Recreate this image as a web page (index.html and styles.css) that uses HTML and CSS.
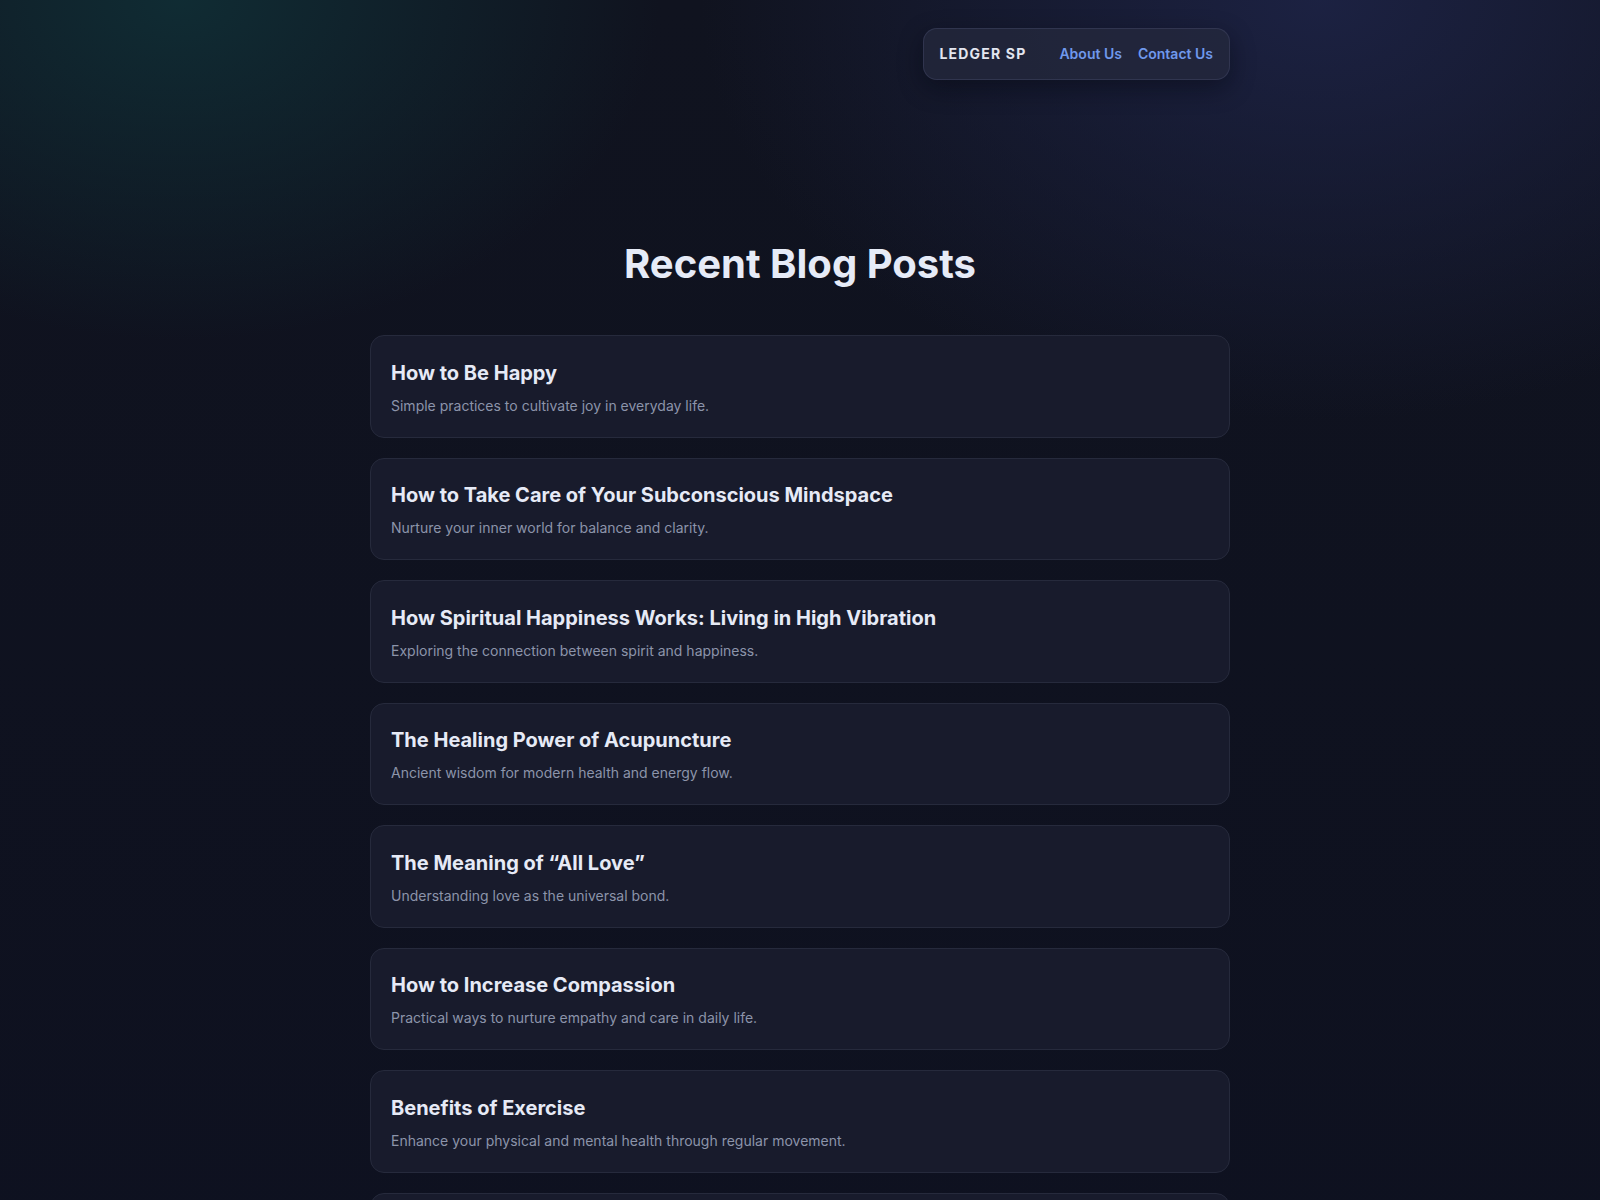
FILE: index.html
```html
<!DOCTYPE html>
<html lang="en">
<head>
<meta charset="utf-8">
<title>Ledger SP — Recent Blog Posts</title>
<link rel="stylesheet" href="styles.css">
</head>
<body>
<div class="page">
  <header class="topbar">
    <nav class="nav">
      <span class="brand">LEDGER SP</span>
      <div class="links">
        <a href="#" class="link">About Us</a>
        <a href="#" class="link">Contact Us</a>
      </div>
    </nav>
  </header>
  <main class="main">
    <h1 class="heading">Recent Blog Posts</h1>
    <div class="posts">
      <article class="card"><h2 class="card-title">How to Be Happy</h2><p class="card-desc">Simple practices to cultivate joy in everyday life.</p></article>
      <article class="card"><h2 class="card-title">How to Take Care of Your Subconscious Mindspace</h2><p class="card-desc">Nurture your inner world for balance and clarity.</p></article>
      <article class="card"><h2 class="card-title">How Spiritual Happiness Works: Living in High Vibration</h2><p class="card-desc">Exploring the connection between spirit and happiness.</p></article>
      <article class="card"><h2 class="card-title">The Healing Power of Acupuncture</h2><p class="card-desc">Ancient wisdom for modern health and energy flow.</p></article>
      <article class="card"><h2 class="card-title">The Meaning of “All Love”</h2><p class="card-desc">Understanding love as the universal bond.</p></article>
      <article class="card"><h2 class="card-title">How to Increase Compassion</h2><p class="card-desc">Practical ways to nurture empathy and care in daily life.</p></article>
      <article class="card"><h2 class="card-title">Benefits of Exercise</h2><p class="card-desc">Enhance your physical and mental health through regular movement.</p></article>
      <article class="card"><h2 class="card-title">The Art of Mindful Living</h2><p class="card-desc">Bringing awareness and presence into every moment.</p></article>
    </div>
  </main>
</div>
</body>
</html>
```

FILE: styles.css
```css
* { box-sizing: border-box; }

html, body {
  margin: 0;
  padding: 0;
}

body {
  min-height: 1200px;
  font-family: Inter, "Noto Sans", "Liberation Sans", sans-serif;
  color: #e6eaf5;
  line-height: 1.6;
  background-color: #0e1120;
  background-image:
    radial-gradient(ellipse 480px 340px at 180px 0px, rgba(16, 52, 58, 0.75), rgba(16, 52, 58, 0) 100%),
    radial-gradient(ellipse 620px 420px at 1320px 0px, rgba(30, 36, 72, 0.85), rgba(30, 36, 72, 0) 100%),
    linear-gradient(180deg, #10131f 0%, #0e1120 100%);
  background-repeat: no-repeat;
}

.page {
  width: 860px;
  margin: 0 auto;
}

.topbar {
  display: flex;
  justify-content: flex-end;
  padding-top: 28px;
}

.nav {
  display: flex;
  align-items: center;
  gap: 33px;
  height: 52px;
  padding: 0 16px 0 15px;
  background: rgba(36, 40, 61, 0.74);
  border: 1px solid rgba(62, 68, 96, 0.55);
  border-radius: 14px;
  box-shadow: 0 8px 24px rgba(5, 7, 15, 0.45);
}

.brand {
  font-size: 14px;
  font-weight: 700;
  letter-spacing: 0.085em;
  color: #e3e6f0;
}

.links {
  display: flex;
  gap: 16px;
}

.link {
  font-size: 14px;
  font-weight: 600;
  color: #6f98ec;
  text-decoration: none;
}

.main {
  padding-top: 160px;
}

.heading {
  margin: 0 0 47px;
  text-align: center;
  font-size: 40px;
  line-height: 48px;
  font-weight: 700;
  color: #e6ebf7;
}

.posts {
  display: flex;
  flex-direction: column;
  gap: 20px;
}

.card {
  padding: 21.5px 20px 19px;
  background: #181b2c;
  border: 1px solid #262a3c;
  border-radius: 14px;
}

.card-title {
  margin: 0 0 6px;
  font-size: 20px;
  line-height: 30px;
  font-weight: 700;
  color: #e6eaf6;
}

.card-desc {
  margin: 0;
  font-size: 14px;
  line-height: 24px;
  color: #8c94aa;
}
```
